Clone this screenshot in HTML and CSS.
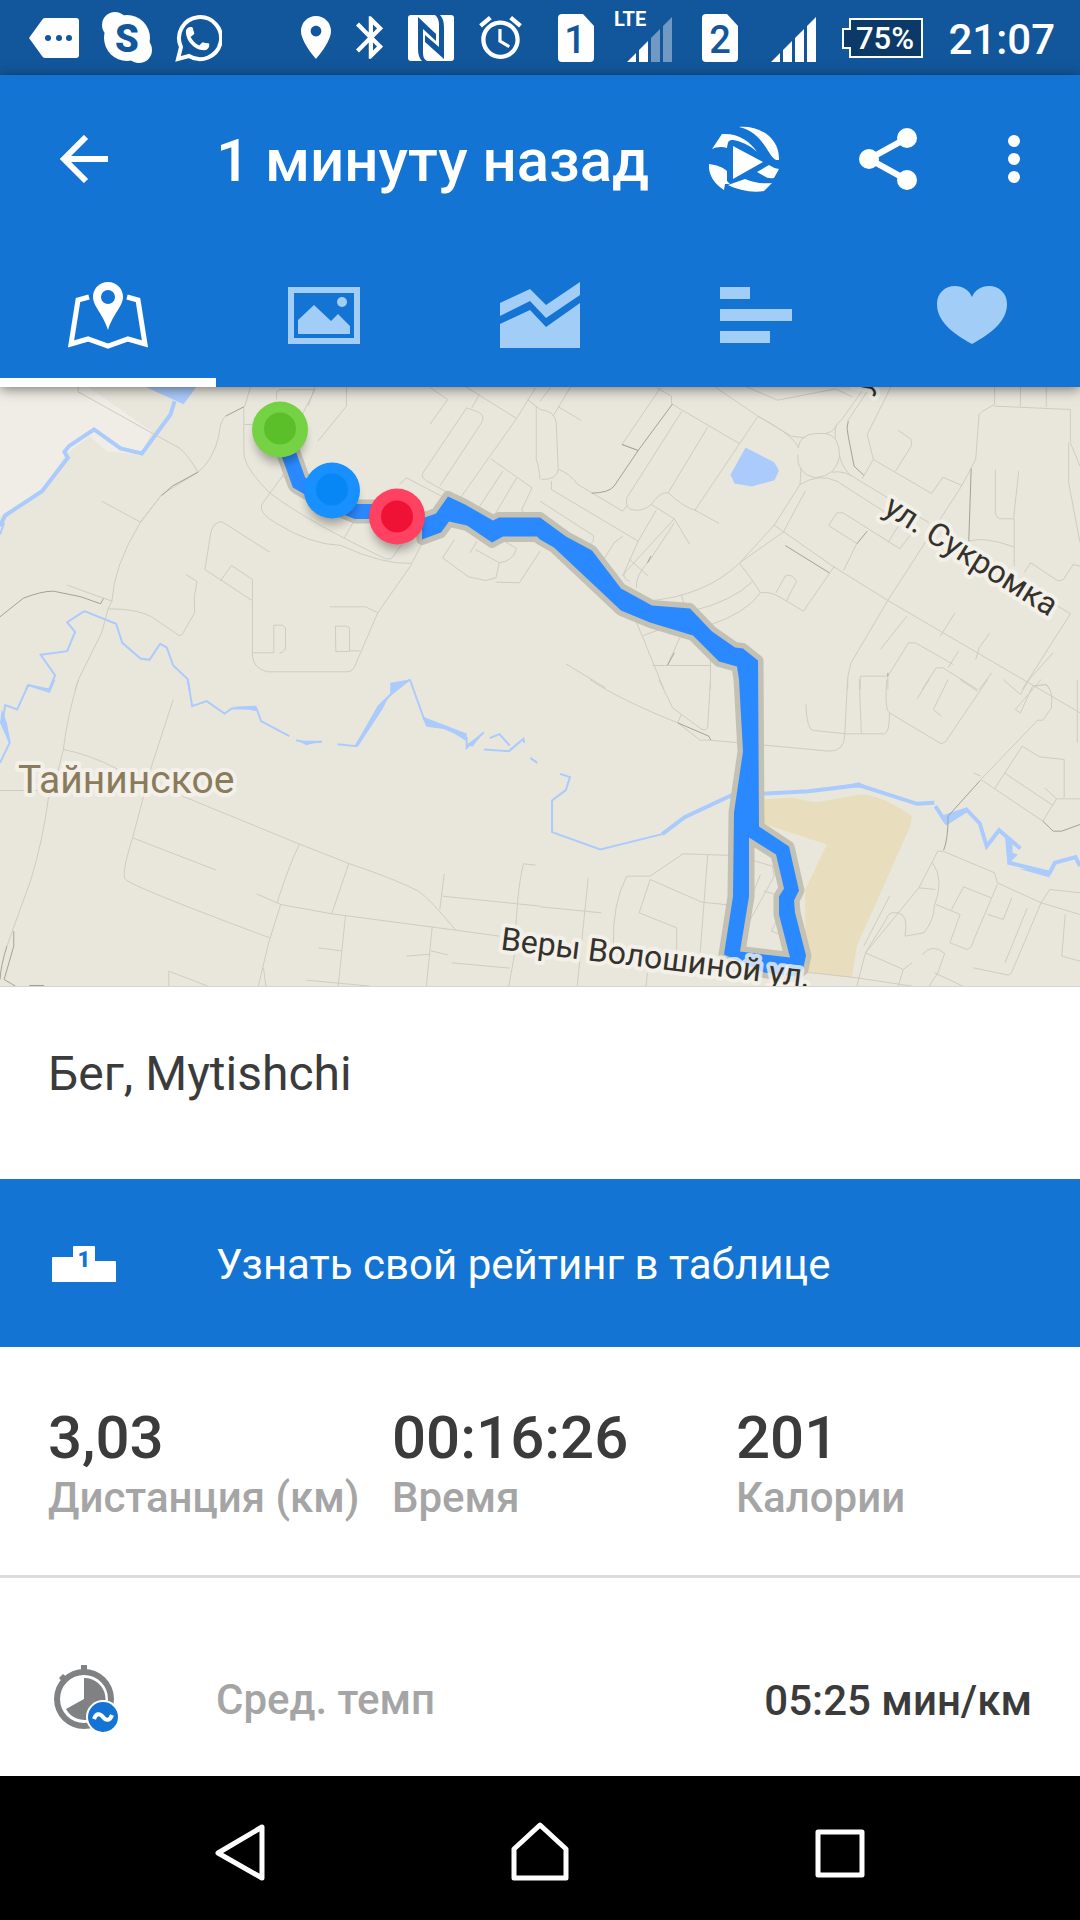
FILE: index.html
```html
<!DOCTYPE html>
<html lang="ru">
	<head>
		<meta charset="UTF-8">
		<meta name="viewport" content="width=device-width, initial-scale=1.0">
		<title>Бег, Mytishchi</title>
		<link rel="stylesheet" href="styles.css">
	</head>
	<body>
		<!-- status bar -->
		<div class="status">
			<div class="status-group notifications">
				<svg width="50" height="40" viewBox="0 0 50 40"><path class="fill" d="M13 2Q14 0 16 0H47Q50 0 50 3V37Q50 40 47 40H16Q14 40 13 38L0 20z"/><g class="hole"><circle cx="19" cy="20" r="3"/><circle cx="30" cy="20" r="3"/><circle cx="40" cy="20" r="3"/></g></svg>
				<svg width="50" height="51" viewBox="0 0 50 51"><g class="fill"><circle cx="25" cy="26" r="23"/><circle cx="13" cy="13" r="13"/><circle cx="37" cy="38" r="13"/></g><text class="hole skype" x="25" y="40">S</text></svg>
				<svg width="47" height="48" viewBox="0 0 47 48"><path class="line" stroke-width="4" d="M3 45L6 33A21 21 0 1 1 14 42z"/><path class="fill" transform="translate(7 9) scale(1.3)" d="M6.6 10.8c1.4 2.8 3.8 5.1 6.6 6.6l2.2-2.2c.3-.3.7-.4 1-.2 1.1.4 2.3.6 3.6.6.6 0 1 .4 1 1 0 2-1 4.4-4 4.4C9 21 3 13 3 7c0-3 2-4 4-4 .6 0 1 .4 1.500 1 0 1.300.6 2.500.9 3.600.1.3 0 .7-.2 1z"/></svg>
			</div>
			<div class="status-group">
				<svg class="fill" width="30" height="43" viewBox="5 2 14 20"><path d="M12 2C8.130 2 5 5.130 5 9c0 5.250 7 13 7 13s7-7.750 7-13c0-3.870-3.130-7-7-7zm0 9.500c-1.380 0-2.500-1.120-2.500-2.500s1.120-2.500 2.500-2.500 2.500 1.120 2.500 2.500-1.120 2.500-2.500 2.500z"/></svg>
				<svg class="fill" width="27" height="43" viewBox="5 2 12.7 20"><path d="M17.71 7.71L12 2h-1v7.59L6.41 5 5 6.41 10.59 12 5 17.59 6.41 19 11 14.41V22h1l5.71-5.71-4.3-4.29 4.3-4.29zM13 5.83l1.88 1.88L13 9.59V5.83zm1.88 10.46L13 18.17v-3.76l1.88 1.88z"/></svg>
				<svg width="46" height="46" viewBox="0 0 46 46"><rect class="fill" width="46" height="46" rx="3"/><path class="hole" d="M10 2L28 19V26L15 14V38Q15 44 19 46H14Q10 42 10 34zM36 44L17 27V20L31 32V10Q31 3 27 0H32Q36 4 36 12z"/></svg>
				<svg class="fill" width="43" height="43" viewBox="2 1.86 20 20.14"><path d="M22 5.72l-4.6-3.86-1.29 1.53 4.6 3.86L22 5.72zM7.88 3.39L6.6 1.86 2 5.71l1.29 1.53 4.59-3.85zM12.5 8H11v6l4.75 2.85.75-1.23-4-2.37V8zM12 4c-4.97 0-9 4.03-9 9s4.02 9 9 9c4.97 0 9-4.03 9-9s-4.03-9-9-9zm0 16c-3.87 0-7-3.13-7-7s3.13-7 7-7 7 3.13 7 7-3.13 7-7 7z"/></svg>
			</div>
			<div class="status-group sims">
				<svg width="36" height="48" viewBox="0 0 36 48"><path class="fill" d="M4 0H25L36 12V44Q36 48 32 48H4Q0 48 0 44V4Q0 0 4 0z"/><text class="hole sim-no" x="17" y="39">1</text></svg>
				<svg class="fill signal" width="48" height="48" viewBox="0 0 48 48"><path d="M3 48L12 39V48zM15 36L24 27V48H15z"/><path opacity=".4" d="M27 24L36 15V48H27zM39 12L48 3V48H39z"/><text class="lte" x="-10" y="12">LTE</text></svg>
				<svg width="36" height="48" viewBox="0 0 36 48"><path class="fill" d="M4 0H25L36 12V44Q36 48 32 48H4Q0 48 0 44V4Q0 0 4 0z"/><text class="hole sim-no" x="18" y="39">2</text></svg>
				<svg class="fill" width="48" height="48" viewBox="0 0 48 48"><path d="M3 48L12 39V48zM15 36L24 27V48H15zM27 24L36 15V48H27zM39 12L48 3V48H39z"/></svg>
			</div>
			<div class="status-group">
				<svg width="81" height="40" viewBox="0 0 81 40"><path class="battery" d="M8 1H80V39H8V30H1V11H8z"/><text class="fill percent" x="43" y="31">75%</text></svg>
				<span class="clock">21:07</span>
			</div>
		</div>

		<header class="header">
			<div class="toolbar">
				<button class="back" aria-label="Назад"><svg width="48" height="48" viewBox="0 0 48 48"><path class="line" stroke-width="6" d="M26 2L4 24L26 46M4 24H48"/></svg></button>
				<h1>1 минуту назад</h1>
				<button class="action" aria-label="Видео">
					<svg class="fill" width="72" height="72" viewBox="0 0 72 72">
						<path d="M31 4C50 2 72 14 71 37L68 37C59 32 56 10 31 4z"/>
						<path d="M4 26L14 11C30 10 42 18 49 29C42 22 32 18 25 17C20 17 20 19 19 25C14 23 8 24 4 26z"/>
						<path d="M25 23L55 39L25 56z"/>
						<path d="M1 41C9 42 14 44 19 48V58L22 61H17L16 67C6 61 0 51 1 41z"/>
						<path d="M20 62L37 56C46 60 56 61 64 60L56 68C44 70 30 67 20 62z"/>
						<path d="M49 49L61 42Q65 45 71 46L66 55Q60 56 56 53z"/>
					</svg>
				</button>
				<button class="action" aria-label="Поделиться"><svg class="fill" width="58" height="62" viewBox="0 0 58 62"><path class="line" stroke-width="6" d="M48 10L10 31L48 52"/><circle cx="48" cy="10" r="10"/><circle cx="10" cy="31" r="10"/><circle cx="48" cy="52" r="10"/></svg></button>
				<button class="action more" aria-label="Ещё"><svg class="fill" width="12" height="48" viewBox="0 0 12 48"><circle cx="6" cy="6" r="6"/><circle cx="6" cy="24" r="6"/><circle cx="6" cy="42" r="6"/></svg></button>
			</div>

			<nav class="tabs">
				<button class="tab active" aria-label="Карта"><svg width="80" height="72" viewBox="0 0 80 72"><path class="line" stroke-width="5" d="M21 18L10 21L3 65L20 60L40 67L60 60L77 65L70 21L59 18"/><path fill-rule="evenodd" d="M40 3C31 3 25 10 25 18C25 27 35 35 40 51C45 35 55 27 55 18C55 10 49 3 40 3zM40 11A7 7 0 1 1 40 25A7 7 0 1 1 40 11z"/></svg></button>
				<button class="tab" aria-label="Фото"><svg width="80" height="72" viewBox="0 0 80 72"><path fill-rule="evenodd" d="M4 8H76V65H4zM10 14V59H70V14z"/><path d="M14 41L30 26L47 42L54 35L66 47V55H14z"/><circle cx="58" cy="23" r="5"/></svg></button>
				<button class="tab" aria-label="Графики"><svg width="80" height="72" viewBox="0 0 80 72"><path d="M0 24L30 10L46 26L80 3V16L46 39L30 22L0 37zM0 45L30 31L46 48L80 24V69H0z"/></svg></button>
				<button class="tab" aria-label="Круги"><svg width="80" height="72" viewBox="0 0 80 72"><path d="M4 8H34V20H4zM4 30H76V42H4zM4 52H54V64H4z"/></svg></button>
				<button class="tab" aria-label="Пульс"><svg width="80" height="72" viewBox="0 0 80 72"><path d="M40 65C20 54 5 42 5 25C5 14 13 7 23 7C31 7 37 11 40 18C43 11 49 7 57 7C67 7 75 14 75 25C75 42 60 54 40 65z"/></svg></button>
			</nav>
		</header>

		<main>
			<!-- map -->
			<svg class="map" viewBox="0 0 1080 600" preserveAspectRatio="xMidYMid slice" role="img" aria-label="Маршрут пробежки">
				<defs>
					<filter id="soft" x="-50%" y="-50%" width="200%" height="200%"><feGaussianBlur stdDeviation="5"/></filter>
				</defs>

				<!-- north west tile -->
				<g class="roads" transform="translate(0 -7) scale(.3444 .3333)">
					<path class="plain" d="M0 0H225L440 155L410 225L310 215L260 170L190 225L125 330L0 410z"/>
					<path class="water" d="M418 20L533 74L572 20z"/>
					<path class="river wide" d="M507 65L495 105L412 222L350 207L273 150L200 200L187 217L197 235L122 335L15 408L0 440"/>
					<path class="river" d="M0 465L12 430"/>
					<path class="river" d="M245 695L195 728L218 757L195 815L118 826L160 888L143 930M245 695L337 733L355 790L408 837L434 841L465 793L484 804L503 858L545 899L550 930M143 930L82 917L75 930"/>
					<path d="M227 20V37L440 160L520 205Q545 225 575 278M708 82V210Q702 250 760 315L785 342Q900 430 1120 538H1136L1170 490M728 20L710 82M710 135H732M803 60V40Q805 30 820 30H915L850 160M915 20L895 80M1006 20V80L923 185M820 290L760 375Q750 400 800 430Q900 495 990 498Q1110 555 1195 552L1232 480M830 260L820 290L1000 390M1025 430L1000 475M295 365L408 428L470 345M575 278Q620 240 635 170Q640 120 655 110M575 278L470 345L408 428Q330 560 325 665L314 688L295 760L228 900L218 930M314 688Q400 688 440 712L520 768Q530 768 533 758L565 700Q560 650 572 606L541 586M195 617L325 665M595 570L612 460Q620 425 645 427L783 518M595 570L730 662M640 604L672 558L733 600V830Q735 865 775 877H1010Q1025 875 1030 860L1097 700L1195 555M735 820H795V737H820L829 745V805Q825 820 812 820M974 740H1005Q1015 740 1015 750V816H975zM1015 814H1045M958 682H1062L1097 700"/>
					<path d="M1248 135L1300 60L1250 25M1278 318L1398 130Q1410 110 1390 98L1355 85L1228 280Q1222 295 1240 305L1310 345M1160 315L1180 295L1300 360M1350 20L1500 117L1555 25M1392 45L1370 85M1500 117L1330 365M1425 238L1545 325M1460 275L1390 385M1500 295L1440 400M1532 60L1568 90M1557 80V240Q1565 260 1568 300M1545 325L1515 390L1520 400M1320 480L1285 535L1360 592L1410 603L1440 595L1450 550L1380 510M1365 520L1385 485M1440 470L1500 507Q1490 545 1450 550M1440 608L1508 610L1568 515"/>
					<path class="dark" d="M708 82L655 110M470 348L500 320L575 278M0 712L68 656Q120 635 155 635L235 652L292 673L300 657"/>
				</g>

				<!-- north east tile -->
				<g class="roads" transform="translate(540 -7) scale(.3444 .3333)">
					<path class="water" d="M597 204L680 248L694 273L681 302L615 321L565 312L553 286z"/>
					<path d="M0 90Q45 95 47 130L53 270Q50 300 5 300M38 110L90 20M55 83L120 123M0 65L30 25M340 25L382 50V73L580 193M350 25L238 195L285 213M412 95L252 355Q245 390 275 392Q300 395 323 375M487 143L372 340Q350 335 323 375L390 418L255 570Q235 585 250 600L260 605M633 110L450 392Q420 385 372 340M450 392L520 432M505 20L633 110L730 170L770 175M595 20L690 62L858 28L907 52M53 270Q85 280 110 315L240 395L252 380M33 305V330L285 485L240 590M0 365L155 468V485L125 515M240 470L215 490L185 540M337 393L285 485M390 418L435 495M390 430L320 540Q275 590 280 625M260 540L315 590"/>
					<path d="M750 205Q755 165 800 162H830Q870 170 870 230Q860 290 800 295Q745 285 748 225M633 110Q740 170 750 205M830 162Q855 155 862 135L880 115L945 20M858 178Q855 145 862 135M960 20L893 125M1020 20L950 165L968 240L935 298M870 230Q880 270 905 290M848 278Q885 270 930 305L1130 430M755 315L758 265M755 315Q810 280 862 305L1050 430M755 315L680 437L580 550Q480 650 310 665M770 335L708 455M1040 152L1078 180V200L1032 275M968 240L1137 342L1170 293L1225 318L1010 663L903 850Q890 890 893 930M710 455L580 550M680 437L850 560L1010 663L1568 1000M580 552L618 605Q560 665 440 695M618 605L640 640Q600 700 490 738M640 640Q670 635 700 655L765 695L855 560M685 640L712 590Q730 580 745 605L715 665M410 645L420 680L440 695L370 858M862 400H880L1045 508L1080 460M862 400L838 438L920 492L882 572M1010 490L1040 440M272 710L295 765L360 930M300 768L430 720M327 858H495M495 800V930M75 853L190 925"/>
					<path d="M1320 20V75L1285 95L1275 105L1265 240L1225 318M1320 80L1540 90V190L1568 260M1395 20V80M1470 20V82M1535 190V310L1568 490M1322 270V400Q1325 418 1340 418H1375L1390 275M1377 418V560M1245 485Q1290 470 1375 502M1405 580L1425 550L1505 605L1520 600L1548 555L1568 560M1485 668L1540 703L1400 930M1065 710L988 810M1205 700L1162 770M1305 762L1275 805L1265 840M1215 815L1185 865M1010 890L1070 790L1090 790L1200 855M930 930V890H1010V930M1110 930L1150 865L1170 865L1270 930M1312 880L1275 930M1490 820L1420 900M1435 920L1470 915L1480 930"/>
					<path class="dark" d="M385 73L285 213L215 320Q200 340 150 341M285 213L238 195M895 125Q888 145 895 170L912 260L940 287M712 498L840 580M950 455L920 493M1252 267L1245 485M322 530L312 550M390 820L370 857M1010 890V880"/>
				</g>

				<!-- south west tile -->
				<g class="roads" transform="translate(0 293) scale(.3444 .3333)">
					<path class="river" d="M158 0L143 37L82 17L50 90L15 77L8 125L28 190L0 250M545 0L558 80L600 65L652 102L673 87H745L758 125L840 170M1190 0L1135 45L1098 82L1035 200L980 194M1190 0L1232 120L1355 175V205L1405 158M1405 210L1478 215L1520 178L1522 190M1422 176L1450 164L1480 198M1540 235L1560 250M860 182L890 190L935 187"/>
					<path class="water" d="M5 90L0 130L24 185L31 190L20 130zM673 82L745 79V95zM1133 10L1190 0L1133 48zM1098 78L1135 40L1110 90L1040 200L1030 198zM1225 110L1355 162V185L1300 150L1238 142zM865 184H935L890 197zM1355 195L1405 158L1372 202zM1478 210L1520 175L1478 218z"/>
					<path d="M228 0Q195 110 184 210L160 310L140 360Q125 480 90 600L20 800M0 333H110M184 210Q260 225 340 268M503 60L440 260L385 475Q350 590 365 600Q380 620 783 775M385 475L628 572M530 350L870 494L1013 552Q1150 600 1215 635Q1250 660 1323 752M870 494Q845 540 805 668M745 643L815 675L963 703L1323 752L1450 770M815 675L780 790L750 920M765 865L772 920M1013 552L963 703M1003 710L982 920M925 805L990 814M1290 583L1277 690M1285 650L1568 680M1555 557L1520 553Q1500 630 1495 820L1477 920M1255 742L1238 920M1180 830L1250 824M1250 814L1300 826M1312 850L1480 866M890 902L1075 920M490 920V875L603 920"/>
					<path class="dark" d="M40 755V800L12 900L45 920M20 800Q2 860 0 900M85 918H128"/>
				</g>

				<!-- south east tile -->
				<g class="roads" transform="translate(540 293) scale(.3444 .3333)">
					<path class="sand" d="M640 360L730 355L800 368Q880 355 930 345Q990 345 1080 410L1075 440L920 800L905 893L770 878V630L833 495L640 430z"/>
					<path class="river" d="M58 283L87 293L75 332L35 363V458L175 510L355 464"/>
					<path class="river wide" d="M355 464L420 413L555 348L780 335L925 317L1095 373L1145 370M1148 380L1178 427L1238 390L1277 432L1297 500L1333 452L1395 507M1358 475L1363 550L1480 580L1495 550L1555 533L1568 560"/>
					<path class="water" d="M1160 410L1235 385L1245 395L1180 438zM1350 470L1372 480V520L1388 525L1358 556zM1390 568L1480 572V594zM870 322L925 308L960 325L925 325z"/>
					<path d="M145 0Q230 60 400 130L465 182L495 182L840 215Q885 215 885 165L893 0M345 0L385 85L470 150Q485 155 487 140L495 0M400 130L410 105M772 75Q775 155 795 153L890 163H1000Q1015 160 1015 100Q1000 90 1007 0M927 0L933 160M1015 100L1165 193Q1180 190 1185 175L1300 0M1185 0L1142 90L1165 110M1130 0L1095 58M1220 0L1270 35M1345 0L1395 45L1420 0M1455 0L1380 90L1395 100L1430 20L1470 15Q1490 30 1485 85L1460 122H1445L1280 300M1400 200L1320 328M1400 200L1450 232L1522 240V355M1348 280L1490 378M1280 300L1460 425M1465 325L1500 358H1568M1460 425L1500 358M1258 280L1280 290M1560 0V190"/>
					<path d="M0 682L178 700M140 595L108 920M320 590L415 523L560 528M320 590H252Q210 670 213 800M320 600L470 668L562 678M320 600L288 700L397 745V840M487 525L465 820M575 530L675 560L680 590L600 740M640 585L600 690M650 635L720 655L672 755L725 775M580 810L725 835M400 870L790 880L920 895L1080 920M312 880L308 920M1170 515L1320 580L1328 610L1455 670L1568 705M1170 515H1155L1100 625L945 820L920 920M1140 550Q1175 600 1145 680Q1145 720 1115 760L1060 770Q1070 705 1040 700Q1010 695 1005 720L945 820L1055 870L1040 920M1100 625L1148 630M1150 675L1220 705L1190 790L1240 810Q1255 805 1260 780L1328 615M1195 690L1230 622L1310 655M1370 655L1345 720L1300 705M1415 685L1350 850M1258 865L1360 887Q1370 885 1375 865L1455 670L1480 630L1568 640M1525 705L1515 830L1568 845M1110 825Q1140 790 1175 822L1155 880L1130 920M1015 650L940 800M1055 870L1080 850M1145 880L1228 920"/>
					<path class="dark" d="M400 130L490 170L496 182M1278 303L1185 410Q1185 480 1172 512M1460 425L1490 455H1515L1568 435"/>
				</g>

				<text class="town" x="18" y="406">Тайнинское</text>
				<text class="street" transform="translate(882 126) rotate(32)">ул. Сукромка</text>
				<text class="street" transform="translate(868 8) rotate(-60)">у</text>

				<!-- track -->
				<path class="track-shade" d="M280 43L299 96L332 115L356 125H420"/>
				<path class="track-shade body" d="M422 132L436 127L448 110L465 118L493 134L499 131H540L566 150L592 164L621 202L652 219L690 222L712 245L735 261L743 262L758 274L759 440L789 460L799 504L794 514L795 526L806 569L803 583L795 590L764 586L724 568L733 510L734 426L743 365L739 293L737 280L719 275L693 249L650 236L621 224L554 161L540 153L537 150H503L492 156L467 139L449 135L441 146L422 153zM749 451V510L740 565L790 571L779 528V510L784 502L776 468z"/>
				<path class="track-line" d="M280 43L299 96L332 115L356 125H420"/>
				<path class="track" d="M422 132L436 127L448 110L465 118L493 134L499 131H540L566 150L592 164L621 202L652 219L690 222L712 245L735 261L743 262L758 274L759 440L789 460L799 504L794 514L795 526L806 569L803 583L795 590L764 586L724 568L733 510L734 426L743 365L739 293L737 280L719 275L693 249L650 236L621 224L554 161L540 153L537 150H503L492 156L467 139L449 135L441 146L422 153zM749 451V510L740 565L790 571L779 528V510L784 502L776 468z"/>

				<text class="street" transform="translate(500 563) rotate(7)">Веры Волошиной ул.</text>

				<g class="pin-shadow" filter="url(#soft)"><circle cx="280" cy="52" r="25"/><circle cx="332" cy="113" r="25"/><circle cx="397" cy="139" r="25"/></g>
				<circle fill="#74d244" cx="280" cy="43" r="28"/><circle fill="#5bbf29" cx="280" cy="42" r="16"/>
				<circle fill="#1890ff" cx="332" cy="104" r="28"/><circle fill="#0786f5" cx="332" cy="103" r="16"/>
				<circle fill="#ff4261" cx="397" cy="130" r="28"/><circle fill="#f01235" cx="397" cy="130" r="16"/>
			</svg>

			<h2 class="activity">Бег, Mytishchi</h2>

			<a class="rating" href="#">
				<svg width="64" height="36" viewBox="0 0 64 36"><path class="fill" d="M0 12Q0 11 1 11H21V1Q21 0 22 0H42Q43 0 43 1V15H63Q64 15 64 16V36H0z"/><text class="rank" x="32" y="21">1</text></svg>
				<span>Узнать свой рейтинг в таблице</span>
			</a>

			<dl class="totals">
				<div><dd>3,03</dd><dt>Дистанция (км)</dt></div>
				<div><dd>00:16:26</dd><dt>Время</dt></div>
				<div><dd>201</dd><dt>Калории</dt></div>
			</dl>

			<dl class="detail">
				<dt>
					<svg width="66" height="70" viewBox="0 0 66 70">
						<g class="watch"><path d="M27 0H33V8H27zM5 13L9 9L15 14L10 19z"/><path fill-rule="evenodd" d="M30 4A30 30 0 1 1 30 64A30 30 0 1 1 30 4zM30 10A24 24 0 1 0 30 58A24 24 0 1 0 30 10z"/><path d="M30 13A21 21 0 1 1 12 44L30 34z"/></g>
						<circle class="fill" cx="49" cy="52" r="17"/><circle class="badge" cx="49" cy="52" r="15"/>
						<path class="line" stroke-width="4" d="M40 54C42 48 46 48 49 52S56 56 58 50"/>
					</svg>
					<span>Сред. темп</span>
				</dt>
				<dd>05:25 мин/км</dd>
			</dl>
		</main>

		<!-- system keys -->
		<nav class="keys">
			<button aria-label="Назад"><svg width="60" height="60" viewBox="0 0 60 60"><path class="line" stroke-width="5" stroke-linejoin="round" d="M52 5V56L8 31z"/></svg></button>
			<button aria-label="Домой"><svg width="60" height="60" viewBox="0 0 60 60"><path class="line" stroke-width="5" stroke-linejoin="round" d="M30 3L56 27V56H4V27z"/></svg></button>
			<button aria-label="Недавние"><svg width="60" height="60" viewBox="0 0 60 60"><rect class="line" stroke-width="5" stroke-linejoin="round" x="8" y="10" width="44" height="43"/></svg></button>
		</nav>
	</body>
</html>
```

FILE: styles.css
```css
* {
	margin: 0;
	padding: 0;
	box-sizing: border-box;
}

body {
	min-height: 100vh;
	display: flex;
	flex-direction: column;
	background-color: #fff;
	color: #3b3b3b;
	font-family: Roboto, "Noto Sans", sans-serif;
	font-size: 42px;
	font-weight: 500;
}

button {
	border: none;
	background: none;
	cursor: pointer;
}

svg {
	display: block;
	flex-shrink: 0;
}

/* icons */
.fill {
	fill: #fff;
}

.line {
	fill: none;
	stroke: #fff;
}

.hole {
	fill: #12579b;
}

/* status bar */
.status {
	height: 75px;
	padding: 0 25px 0 29px;
	display: flex;
	align-items: center;
	justify-content: flex-end;
	background-color: #12579b;
	color: #fff;
}

.status-group {
	display: flex;
	align-items: center;
	gap: 25px;
}

.notifications {
	gap: 23px;
	margin-right: auto;
}

.sims {
	gap: 30px;
	margin: 0 26px 0 36px;
}

.signal {
	overflow: visible;
}

.skype,
.sim-no,
.percent {
	text-anchor: middle;
	font-size: 38px;
}

.skype {
	font-weight: 900;
}

.percent {
	font-size: 31px;
}

.lte {
	font-size: 20px;
	font-weight: 700;
}

.battery {
	fill: #0b3a68;
	stroke: #fff;
	stroke-width: 2;
}

.clock {
	padding-top: 3px;
}

/* header */
.header {
	position: relative;
	z-index: 1;
	background-color: #1374d3;
	box-shadow: 0 2px 12px rgba(0, 0, 0, .5);
}

.toolbar {
	height: 168px;
	padding-right: 12px;
	display: flex;
	align-items: center;
	color: #fff;
}

.back {
	width: 216px;
	padding-left: 60px;
}

h1 {
	flex: 1;
	padding-top: 2px;
	font-size: 60px;
	font-weight: 500;
	white-space: nowrap;
}

.action {
	width: 144px;
	display: flex;
	justify-content: center;
}

.more {
	width: 108px;
}

.tabs {
	display: flex;
}

.tab {
	flex: 1;
	height: 144px;
	display: flex;
	align-items: center;
	justify-content: center;
	fill: #a1cdf6;
}

.active {
	fill: #fff;
	box-shadow: inset 0 -9px #fff;
}

main {
	flex: 1;
}

/* map */
.map {
	width: 100%;
	height: 600px;
	background-color: #e9e7dc;
	border-bottom: 1px solid #d8d6cc;
}

.roads path {
	fill: none;
	stroke: #cfccc0;
	stroke-width: 1;
	vector-effect: non-scaling-stroke;
}

.roads .dark {
	stroke: #a5a193;
}

.roads .river {
	stroke: #abcbfd;
	stroke-width: 2;
}

.roads .wide {
	stroke-width: 4;
}

.roads .water {
	fill: #abcbfd;
	stroke: none;
}

.roads .plain {
	fill: #f0ede6;
	stroke: none;
}

.roads .sand {
	fill: #e8debd;
	stroke: none;
}

.town,
.street {
	font-weight: 400;
	paint-order: stroke;
	stroke: rgba(245, 243, 237, .8);
	stroke-width: 8;
	stroke-linejoin: round;
}

.town {
	font-size: 39px;
	fill: #8a7b5a;
}

.street {
	font-size: 32px;
	fill: #35322c;
}

.track {
	fill: #2b89ff;
	fill-rule: evenodd;
}

.track-line {
	fill: none;
	stroke: #2b89ff;
	stroke-width: 15;
}

.track-shade {
	fill: none;
	stroke: #c3c0b4;
	stroke-width: 24;
	stroke-linejoin: round;
}

.body {
	stroke-width: 11;
}

.pin-shadow {
	opacity: .3;
}

/* activity */
.activity {
	padding: 0 48px 18px;
	font-size: 48px;
	font-weight: 400;
	line-height: 174px;
}

.rating {
	height: 168px;
	padding: 2px 52px 0;
	display: flex;
	align-items: center;
	gap: 100px;
	background-color: #1374d3;
	color: #fff;
	font-weight: 400;
	text-decoration: none;
}

.rank {
	fill: #1374d3;
	font-size: 22px;
	font-weight: 900;
	text-anchor: middle;
}

.totals {
	padding: 56px 0 52px 48px;
	display: grid;
	grid-template-columns: repeat(3, 1fr);
	border-bottom: 3px solid #dcdcdc;
}

.totals div {
	white-space: nowrap;
}

.totals dd {
	font-size: 60px;
	line-height: 70px;
}

dt {
	color: #a5a5a5;
	line-height: 50px;
}

.detail {
	padding: 87px 48px 0 54px;
	display: flex;
	align-items: center;
	justify-content: space-between;
}

.detail dt {
	display: flex;
	align-items: center;
	gap: 96px;
}

.watch {
	fill: #7f8183;
}

.badge {
	fill: #1374d3;
}

/* system keys */
.keys {
	height: 144px;
	padding-top: 8px;
	display: flex;
	justify-content: center;
	background-color: #000;
}

.keys button {
	width: 300px;
	display: flex;
	align-items: center;
	justify-content: center;
}
```
